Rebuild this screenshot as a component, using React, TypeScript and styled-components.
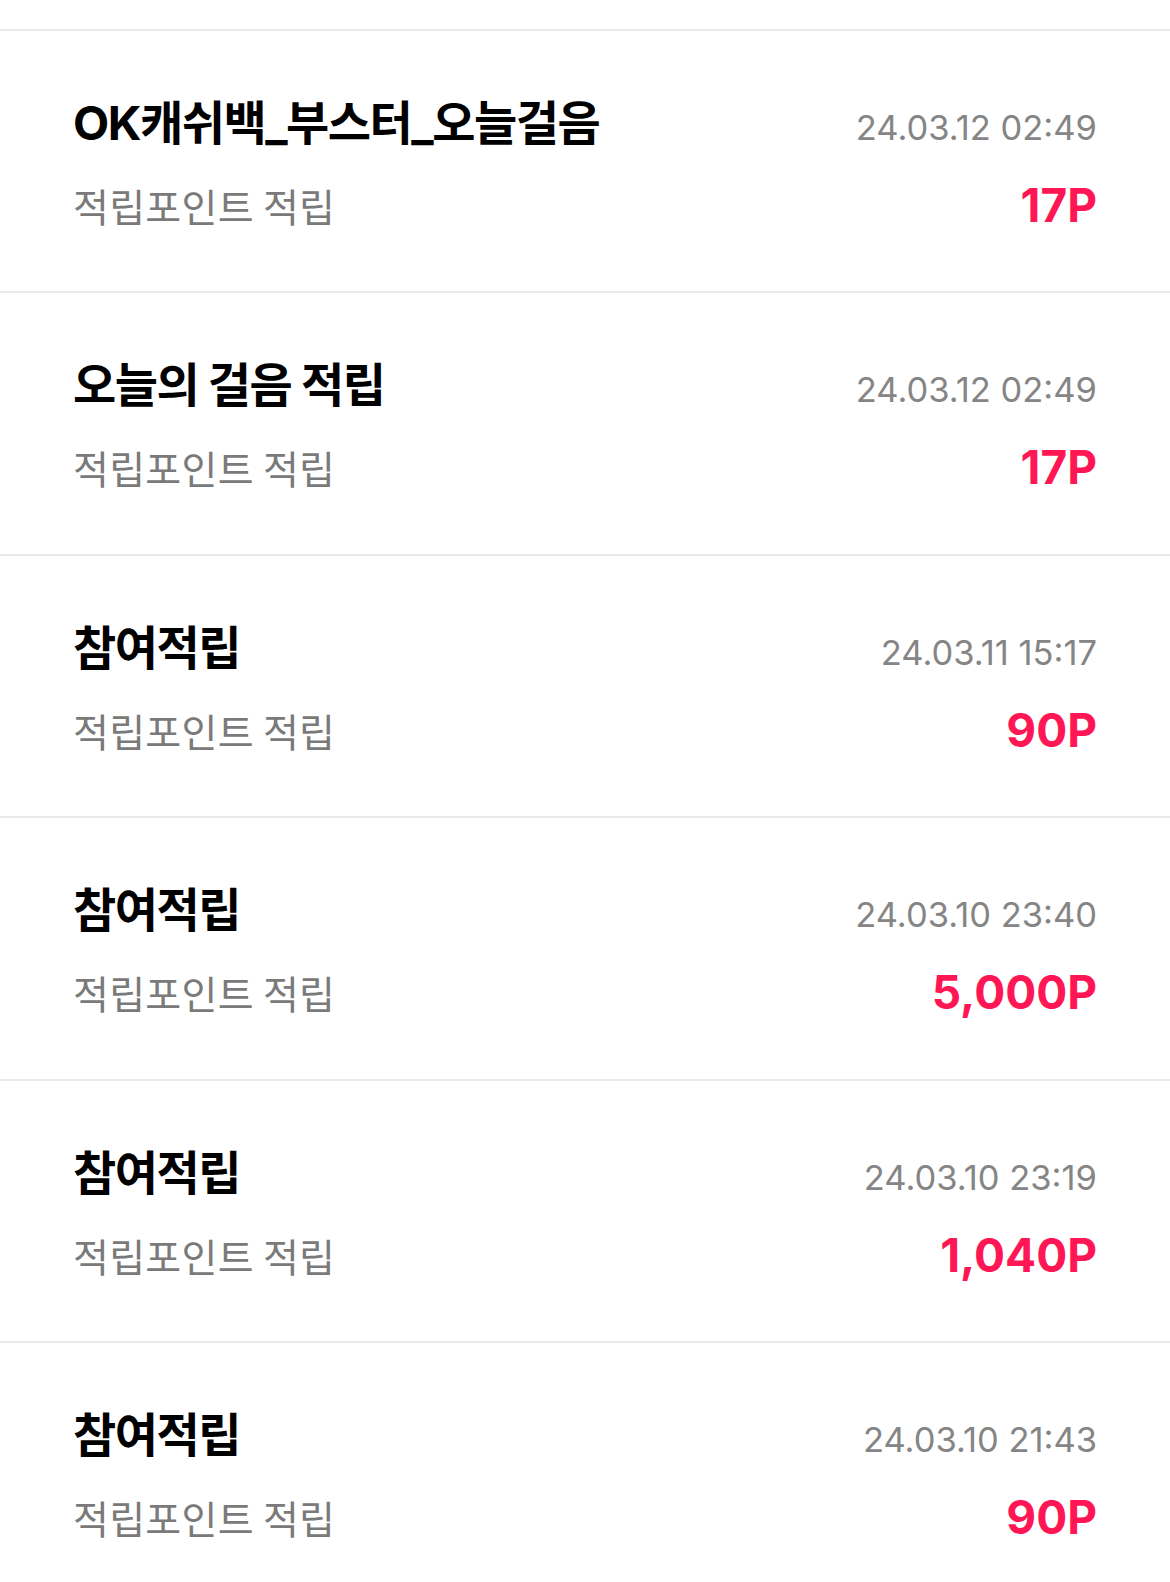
import React from 'react';
import styled, { createGlobalStyle } from 'styled-components';

const GlobalStyle = createGlobalStyle`
  html, body {
    margin: 0;
    padding: 0;
    background: #fff;
  }
  body {
    font-family: Inter, "Noto Sans CJK KR", sans-serif;
    -webkit-font-smoothing: antialiased;
  }
`;

const List = styled.div`
  padding-top: 29px;
  width: 1170px;
`;

const Row = styled.div`
  box-sizing: border-box;
  height: 262.4px;
  border-top: 2.5px solid #e9e9e9;
  padding: 66px 73px 0 73px;
  display: flex;
  flex-direction: column;
  gap: 30px;
`;

const Line = styled.div`
  display: flex;
  justify-content: space-between;
  align-items: baseline;
  height: 52px;
`;

const Title = styled.div`
  font-family: Inter, "Noto Sans CJK KR", sans-serif;
  font-weight: 700;
  font-size: 47px;
  line-height: 52px;
  letter-spacing: -1.5px;
  color: #000;
`;

const Sub = styled.div`
  font-family: "Noto Sans CJK KR", sans-serif;
  font-weight: 400;
  font-size: 39px;
  line-height: 52px;
  letter-spacing: 0.3px;
  color: #7a7a7a;
`;

const Date = styled.div`
  font-family: Inter, sans-serif;
  font-size: 34.5px;
  line-height: 52px;
  letter-spacing: 0;
  color: #858585;
`;

const Points = styled.div`
  font-family: Inter, sans-serif;
  font-weight: 700;
  font-size: 46px;
  line-height: 52px;
  letter-spacing: 0;
  color: #ff1654;
`;

interface Item {
  title: string;
  date: string;
  points: string;
}

const items: Item[] = [
  { title: 'OK캐쉬백_부스터_오늘걸음', date: '24.03.12 02:49', points: '17P' },
  { title: '오늘의 걸음 적립', date: '24.03.12 02:49', points: '17P' },
  { title: '참여적립', date: '24.03.11 15:17', points: '90P' },
  { title: '참여적립', date: '24.03.10 23:40', points: '5,000P' },
  { title: '참여적립', date: '24.03.10 23:19', points: '1,040P' },
  { title: '참여적립', date: '24.03.10 21:43', points: '90P' },
];

const App = () => {
  return (
    <>
      <GlobalStyle />
      <List>
        {items.map((it, i) => (
          <Row key={i}>
            <Line>
              <Title>{it.title}</Title>
              <Date>{it.date}</Date>
            </Line>
            <Line>
              <Sub>적립포인트 적립</Sub>
              <Points>{it.points}</Points>
            </Line>
          </Row>
        ))}
      </List>
    </>
  );
};

export default App;
